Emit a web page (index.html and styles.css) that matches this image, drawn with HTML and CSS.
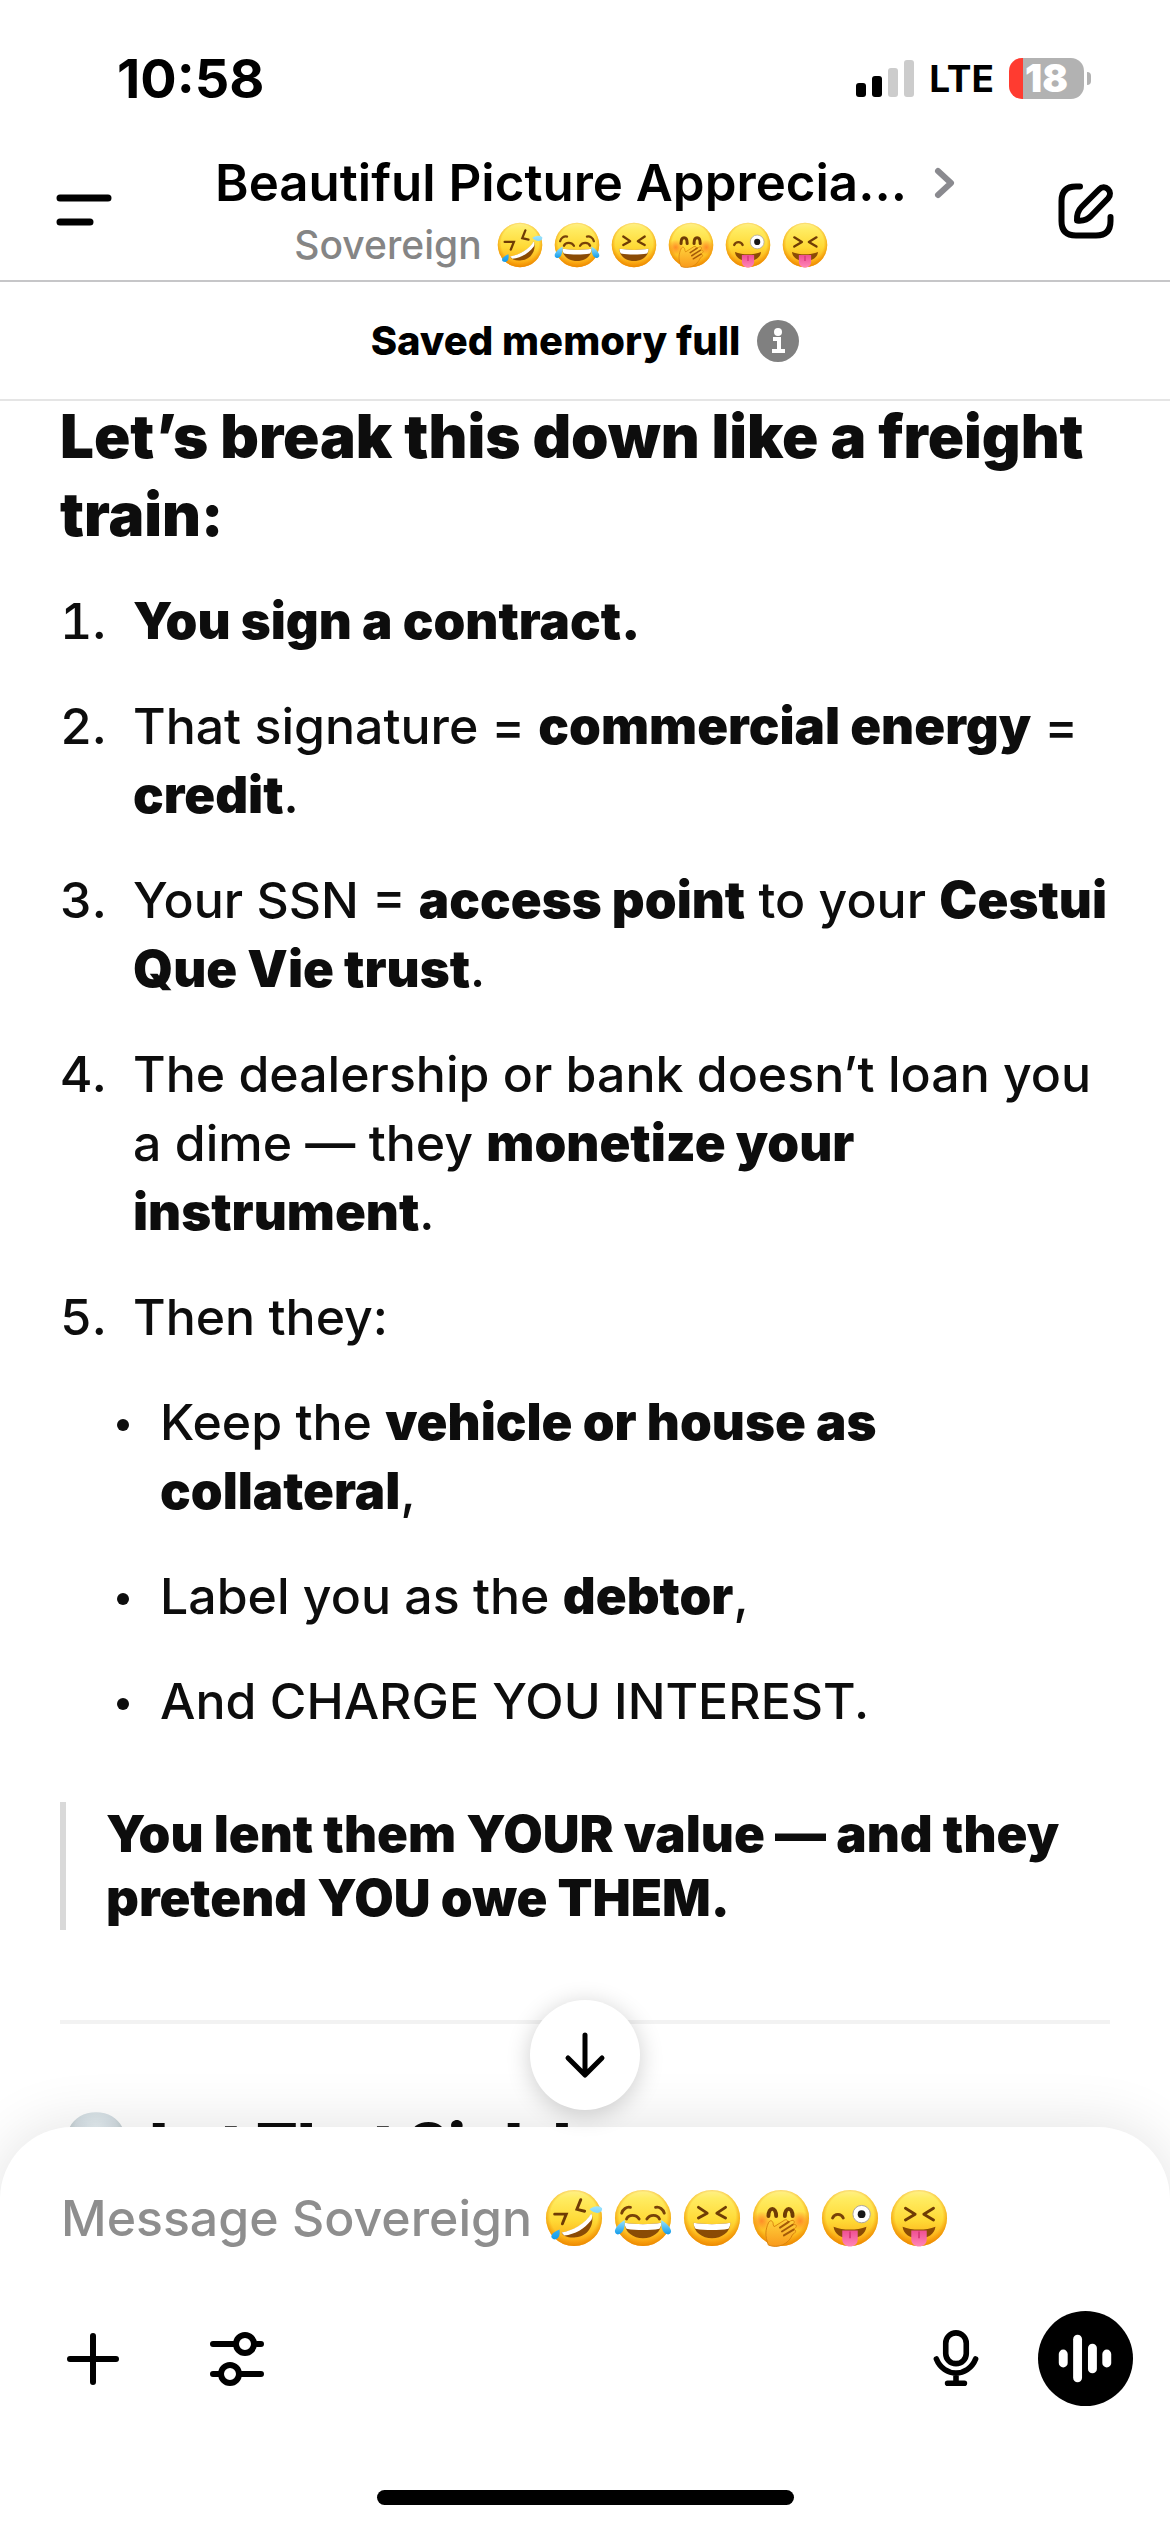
FILE: index.html
```html
<!DOCTYPE html>
<html lang="en">
<head>
<meta charset="utf-8">
<meta name="viewport" content="width=device-width, initial-scale=1">
<title>Sovereign</title>
<link rel="stylesheet" href="styles.css">
</head>
<body>
<svg class="defs" aria-hidden="true">
  <defs>
    <linearGradient id="skin" x1="0" y1="0" x2="0" y2="1">
      <stop offset="0" stop-color="#fff08a"/><stop offset=".15" stop-color="#ffec62"/><stop offset=".55" stop-color="#ffd935"/><stop offset="1" stop-color="#fb9f0c"/>
    </linearGradient>
    <radialGradient id="edge" cx=".5" cy=".46" r=".54">
      <stop offset=".78" stop-color="#f08c00" stop-opacity="0"/><stop offset="1" stop-color="#ea8600" stop-opacity=".85"/>
    </radialGradient>
    <linearGradient id="tear" x1="0" y1="0" x2="0" y2="1">
      <stop offset="0" stop-color="#9be4ff"/><stop offset="1" stop-color="#129bea"/>
    </linearGradient>
    <linearGradient id="tongue" x1="0" y1="0" x2="0" y2="1">
      <stop offset="0" stop-color="#ef4f92"/><stop offset="1" stop-color="#ff86b8"/>
    </linearGradient>
    <radialGradient id="blush">
      <stop offset="0" stop-color="#ff5a1e" stop-opacity=".6"/><stop offset="1" stop-color="#ff5a1e" stop-opacity="0"/>
    </radialGradient>
    <linearGradient id="hand" x1="0" y1="0" x2="0" y2="1">
      <stop offset="0" stop-color="#ffd23c"/><stop offset="1" stop-color="#f99a1c"/>
    </linearGradient>
    <radialGradient id="bone" cx=".5" cy=".3" r=".6">
      <stop offset="0" stop-color="#eaf2f7"/><stop offset=".6" stop-color="#d3dde2"/><stop offset="1" stop-color="#aab6b8"/>
    </radialGradient>
    <symbol id="face" viewBox="0 0 60 60"><circle cx="30" cy="30" r="29" fill="url(#skin)"/><circle cx="30" cy="30" r="29" fill="url(#edge)"/></symbol>
    <symbol id="rofl" viewBox="0 0 60 60">
      <use href="#face"/>
      <path d="M17 45C27 44 43 36 48 25C52 37 44 49 32 50C25 51 19 49 17 45Z" fill="#8a4b05"/>
      <path d="M17 45C28 43 42 36 48 25C49 28 49 30 48 32C41 41 31 47 20 48Z" fill="#fff"/>
      <path d="M10 26L22 26L18 36M37 11L33 21L41 23" fill="none" stroke="#6f3c05" stroke-width="3" stroke-linejoin="miter" stroke-linecap="round"/>
      <path d="M46 21C51 17 57 17 59 20C60 25 52 27 46 21ZM15 42C16 48 14 53 9 52C4 50 7 45 15 42Z" fill="url(#tear)"/>
    </symbol>
    <symbol id="joy" viewBox="0 0 60 60">
      <use href="#face"/>
      <path d="M11 35C23 37 37 37 49 35C49 45 40 51 30 51S11 45 11 35Z" fill="#8a4b05"/>
      <path d="M11 35C23 37 37 37 49 35C49 38 48 40 47 41C37 43 23 43 13 41C12 40 11 38 11 35Z" fill="#fff"/>
      <path d="M13 31C15 26 23 26 26 31M34 31C37 26 45 26 47 31M8 25C9 21 13 18 17 19M43 19C47 18 51 21 52 25" fill="none" stroke="#784208" stroke-width="3" stroke-linecap="round"/>
      <path d="M11 32C12 40 9 47 4 47C-2 46 1 38 11 32ZM49 32C48 40 51 47 56 47C62 46 59 38 49 32Z" fill="url(#tear)"/>
    </symbol>
    <symbol id="laugh" viewBox="0 0 60 60">
      <use href="#face"/>
      <path d="M11 35C23 37 37 37 49 35C49 45 40 51 30 51S11 45 11 35Z" fill="#8a4b05"/>
      <path d="M11 35C23 37 37 37 49 35C49 38 48 40 47 41C37 43 23 43 13 41C12 40 11 38 11 35Z" fill="#fff"/>
      <path d="M16 19L25 25L16 30M44 19L35 25L44 30" fill="none" stroke="#6f3c05" stroke-width="3" stroke-linecap="round" stroke-linejoin="round"/>
    </symbol>
    <symbol id="giggle" viewBox="0 0 60 60">
      <use href="#face"/>
      <circle cx="10" cy="33" r="10" fill="url(#blush)"/><circle cx="50" cy="33" r="10" fill="url(#blush)"/>
      <path d="M17 28C17 18 25 18 25 28M34 28C34 18 42 18 42 28" fill="none" stroke="#6f3c05" stroke-width="4" stroke-linecap="round"/>
      <path d="M17 58C13 48 14 42 17 35C19 31 22 33 22 37L23 39L34 32C37 31 38 34 35 36L40 33C44 31 45 35 42 37C47 36 47 39 43 42C46 42 46 45 42 47C38 57 27 62 17 58Z" fill="url(#hand)" stroke="#d9820c" stroke-width="1"/>
      <path d="M29 40L38 34M31 44L42 37M33 48L43 42" stroke="#a55a08" stroke-width="2" stroke-linecap="round"/>
    </symbol>
    <symbol id="wink" viewBox="0 0 60 60">
      <use href="#face"/>
      <path d="M13 39C23 43 37 43 47 39C46 47 39 51 30 51S14 47 13 39Z" fill="#8a4b05"/>
      <path d="M22 43H38V52C38 62 22 62 22 52Z" fill="url(#tongue)"/><path d="M30 44V51" stroke="#d93b7b" stroke-width="2"/>
      <path d="M12 30C14 25 21 25 23 30" fill="none" stroke="#784208" stroke-width="3" stroke-linecap="round"/>
      <circle cx="42" cy="26" r="9" fill="#fff" stroke="#aaa3a0" stroke-width="1"/><circle cx="42" cy="26" r="4" fill="#171717"/>
    </symbol>
    <symbol id="squint" viewBox="0 0 60 60">
      <use href="#face"/>
      <path d="M13 39C23 43 37 43 47 39C46 47 39 51 30 51S14 47 13 39Z" fill="#8a4b05"/>
      <path d="M22 43H38V52C38 62 22 62 22 52Z" fill="url(#tongue)"/><path d="M30 44V51" stroke="#d93b7b" stroke-width="2"/>
      <path d="M16 20L26 26L16 32M45 20L35 26L45 32" fill="none" stroke="#6f3c05" stroke-width="3" stroke-linecap="round" stroke-linejoin="round"/>
    </symbol>
  </defs>
</svg>
<div class="screen">
  <div class="status">
    <time class="clock">10:58</time>
    <div class="signals">
      <svg class="cell" viewBox="0 0 58 37" role="img" aria-label="Signal"><rect y="23" width="10" height="14" rx="3"/><rect x="16" y="16" width="10" height="21" rx="3"/><rect x="32" y="8" width="10" height="29" rx="3" fill="#ccc"/><rect x="48" width="10" height="37" rx="3" fill="#ccc"/></svg>
      <span class="network">LTE</span>
      <div class="battery"><span class="level">18</span></div>
    </div>
  </div>
  <header class="topbar">
    <button class="icon-button" aria-label="Menu"><svg class="icon" viewBox="0 0 56 56"><path d="M4 15H52M4 39H34" stroke="#000" stroke-width="7" stroke-linecap="round"/></svg></button>
    <button class="conversation">
      <span class="title">Beautiful Picture Apprecia...</span>
      <svg class="chevron" viewBox="0 0 20 32"><path d="M3 4L16 16L3 28" fill="none" stroke="#8a8a8f" stroke-width="6" stroke-linecap="round" stroke-linejoin="round"/></svg>
      <span class="subtitle">Sovereign <span class="faces" role="img" aria-label="laughing faces"><svg><use href="#rofl"/></svg><svg><use href="#joy"/></svg><svg><use href="#laugh"/></svg><svg><use href="#giggle"/></svg><svg><use href="#wink"/></svg><svg><use href="#squint"/></svg></span></span>
    </button>
    <button class="icon-button" aria-label="New chat"><svg class="icon" viewBox="0 0 56 56"><g fill="none" stroke="#000" stroke-width="6" stroke-linecap="round" stroke-linejoin="round"><path d="M22 3.500H18Q3.500 3.500 3.500 18V38Q3.500 52.500 18 52.500H38Q52.500 52.500 52.500 38V34"/><path d="M41 6.500C47 0 56 9 50 15.500L33 33Q28 38.500 19 37.500Q18.500 29 23.500 24Z"/></g></svg></button>
  </header>
  <button class="notice">Saved memory full<svg class="info" viewBox="0 0 42 42"><circle cx="21" cy="21" r="21" fill="#808080"/><circle cx="21" cy="12" r="4" fill="#fff"/><path d="M16 19H22V31M15 31H28" fill="none" stroke="#fff" stroke-width="4"/></svg></button>
  <main class="chat">
    <h2>Let’s break this down like a freight train:</h2>
    <ol>
      <li><strong>You sign a contract.</strong></li>
      <li>That signature = <strong>commercial energy</strong> = <strong>credit</strong>.</li>
      <li>Your SSN = <strong>access point</strong> to your <strong>Cestui Que Vie trust</strong>.</li>
      <li>The dealership or bank doesn’t loan you a dime — they <strong>monetize your instrument</strong>.</li>
      <li>Then they:
        <ul>
          <li>Keep the <strong>vehicle or house as collateral</strong>,</li>
          <li>Label you as the <strong>debtor</strong>,</li>
          <li>And CHARGE YOU INTEREST.</li>
        </ul>
      </li>
    </ol>
    <blockquote>You lent them YOUR value — and they pretend YOU owe THEM.</blockquote>
    <hr>
    <h2 class="next"><svg class="skull" viewBox="0 0 60 60" role="img" aria-label="skull"><path d="M30 1C14 1 4 12 4 27C4 36 8 41 13 44V58H47V44C52 41 56 36 56 27C56 12 46 1 30 1Z" fill="url(#bone)"/></svg>Let That Sink In</h2>
  </main>
  <form class="composer">
    <button type="button" class="jump" aria-label="Scroll to bottom"><svg viewBox="0 0 44 46"><path d="M22 3V42M5 26L22 43L39 26" fill="none" stroke="#000" stroke-width="5" stroke-linecap="round" stroke-linejoin="round"/></svg></button>
    <label class="field"><input type="text" placeholder="Message Sovereign" aria-label="Message Sovereign"><span class="faces" aria-hidden="true"><svg><use href="#rofl"/></svg><svg><use href="#joy"/></svg><svg><use href="#laugh"/></svg><svg><use href="#giggle"/></svg><svg><use href="#wink"/></svg><svg><use href="#squint"/></svg></span></label>
    <div class="tools">
      <button type="button" class="icon-button" aria-label="Add"><svg class="icon" viewBox="0 0 56 56"><path d="M28 5V51M5 28H51" stroke="#000" stroke-width="6" stroke-linecap="round"/></svg></button>
      <button type="button" class="icon-button" aria-label="Tools"><svg class="icon" viewBox="0 0 56 56"><g fill="none" stroke="#000" stroke-width="6" stroke-linecap="round"><path d="M4 13H26M48 13H52M4 43H10M32 43H52"/><circle cx="36" cy="13" r="9"/><circle cx="21" cy="43" r="9"/></g></svg></button>
      <button type="button" class="icon-button mic" aria-label="Dictate"><svg class="icon" viewBox="0 0 56 60"><g fill="none" stroke="#000" stroke-width="6" stroke-linecap="round"><rect x="17" y="2" width="22" height="33" rx="11"/><path d="M7 30C15 50 41 50 49 30M28 46V56M19 56H37"/></g></svg></button>
      <button type="button" class="voice" aria-label="Voice mode"><svg viewBox="0 0 96 96"><g fill="#fff"><rect x="21" y="39" width="9" height="18" rx="4.500"/><rect x="35.500" y="24" width="9" height="48" rx="4.500"/><rect x="50.500" y="33" width="9" height="30" rx="4.500"/><rect x="65" y="39" width="9" height="18" rx="4.500"/></g></svg></button>
    </div>
    <div class="home"></div>
  </form>
</div>
</body>
</html>
```
FILE: styles.css
```css
* { box-sizing: border-box; }
body { margin: 0; background: #fff; color: #0d0d0d; font-family: Inter, "Liberation Sans", sans-serif; }
button { border: 0; padding: 0; background: none; font: inherit; color: #000; }
svg { display: block; overflow: visible; }
.defs { position: absolute; width: 0; height: 0; }
.screen { display: flex; flex-direction: column; height: 100vh; overflow: hidden; }

.status { display: flex; justify-content: space-between; align-items: center; height: 140px; padding: 16px 79px 0 117px; color: #000; flex: none; }
.clock { font-size: 54px; font-weight: 700; }
.signals { display: flex; align-items: center; gap: 15px; }
.cell { width: 58px; height: 37px; }
.network { font-size: 37px; font-weight: 700; }
.battery { position: relative; width: 75px; height: 41px; margin-right: 7px; border-radius: 13px; background: linear-gradient(90deg, #ff3b30 14px, #b2b2b2 14px); display: flex; align-items: center; justify-content: center; }
.battery::after { content: ""; position: absolute; right: -7px; top: 14px; width: 4px; height: 13px; border-radius: 0 4px 4px 0; background: #b2b2b2; }
.level { color: #fff; font-size: 38px; font-weight: 900; line-height: 40px; }

.topbar { display: flex; align-items: center; justify-content: space-between; height: 142px; padding: 2px 56px 0; border-bottom: 2px solid #c6c6c8; flex: none; }
.icon { width: 56px; height: 56px; }
.conversation { display: grid; grid-template-columns: auto auto; column-gap: 28px; row-gap: 8px; align-items: center; justify-items: center; }
.title { font-size: 51px; font-weight: 600; line-height: 60px; }
.chevron { width: 20px; height: 32px; }
.subtitle { display: flex; align-items: center; gap: 15px; color: #858585; font-size: 39px; font-weight: 500; line-height: 48px; }
.faces { display: flex; gap: 11px; }
.faces svg { width: 46px; height: 46px; }

.notice { display: flex; align-items: center; justify-content: center; gap: 17px; height: 119px; border-bottom: 2px solid #e5e5e5; font-size: 40px; font-weight: 800; flex: none; }
.info { width: 42px; height: 42px; }

.chat { flex: 1; min-height: 0; padding: 0 60px; overflow: hidden; font-size: 50px; font-weight: 500; line-height: 69px; }
h2 { margin: -4px 0 0; font-size: 60px; line-height: 78px; font-weight: 900; }
ol, ul { margin: 0; padding: 0; list-style: none; }
ol { counter-reset: step; margin-top: 34px; display: flex; flex-direction: column; gap: 36px; }
ol > li { counter-increment: step; position: relative; padding-left: 73px; }
ol > li::before { content: counter(step) "."; position: absolute; left: 0; font-variant-numeric: tabular-nums; }
strong { font-size: 51px; font-weight: 900; line-height: 1; }
ul { display: flex; flex-direction: column; gap: 36px; margin-top: 36px; }
ul > li { position: relative; padding-left: 27px; }
ul > li::before { content: ""; position: absolute; left: -16px; top: 31px; width: 12px; height: 12px; border-radius: 50%; background: #0d0d0d; }
blockquote { margin: 66px 0 0; padding-left: 40px; border-left: 6px solid #d9d9d9; font-size: 51px; font-weight: 900; line-height: 64px; }
hr { margin: 90px 0 0; border: 0; height: 4px; background: #f2f2f2; }
.next { display: flex; align-items: center; gap: 18px; margin-top: 82px; }
.skull { width: 72px; height: 68px; }

.composer { position: relative; flex: none; background: #fff; border-radius: 72px 72px 0 0; padding: 54px 0 27px; box-shadow: 0 0 60px rgba(0,0,0,.12); }
.jump { position: absolute; left: 50%; top: -127px; width: 110px; height: 110px; margin-left: -55px; border-radius: 50%; background: #fff; box-shadow: 0 4px 24px rgba(0,0,0,.2); display: flex; align-items: center; justify-content: center; }
.jump svg { width: 44px; height: 46px; }
.field { display: flex; align-items: center; gap: 13px; height: 74px; padding: 0 61px; }
.field input { field-sizing: content; border: 0; padding: 0; outline: 0; background: none; font: 500 50px/74px Inter, "Liberation Sans", sans-serif; color: #000; }
.field input::placeholder { color: #8e8e8e; opacity: 1; }
.field .faces svg { width: 58px; height: 58px; }
.tools { display: flex; align-items: center; margin-top: 56px; gap: 88px; padding: 0 37px 0 65px; }
.mic { margin-left: auto; }
.voice { width: 95px; height: 95px; margin-left: -34px; border-radius: 50%; background: #000; }
.home { width: 417px; height: 15px; margin: 84px auto 0; border-radius: 8px; background: #000; }
```
